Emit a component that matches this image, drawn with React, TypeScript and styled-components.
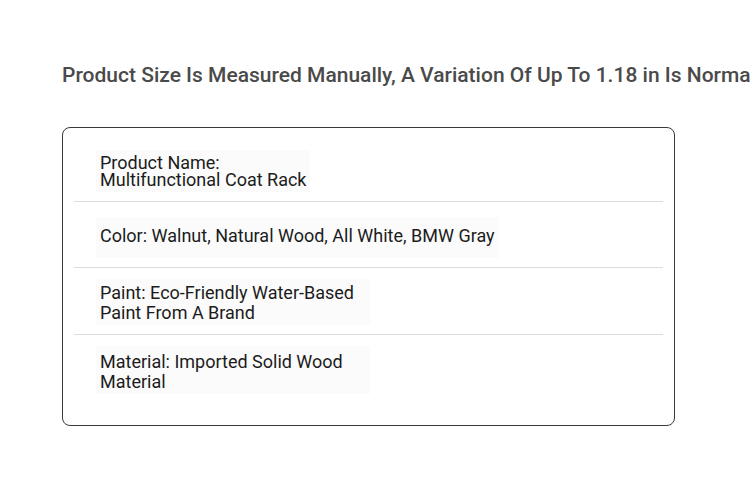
import React from "react";
import styled, { createGlobalStyle } from "styled-components";

const Global = createGlobalStyle`
  html, body { margin: 0; padding: 0; background: #fff; overflow: hidden; }
  body { font-family: Roboto, "Liberation Sans", sans-serif; }
`;

const Page = styled.div`
  width: 750px;
  height: 482px;
  padding: 61px 0 0 62px;
  box-sizing: border-box;
  overflow: hidden;
`;

const Title = styled.h2`
  margin: 0;
  font-size: 21px;
  font-weight: 500;
  line-height: 28px;
  color: #4a4a4a;
  white-space: nowrap;
`;

const Card = styled.div`
  margin-top: 38px;
  width: 613px;
  box-sizing: border-box;
  border: 1px solid #3a3a3a;
  border-radius: 8px;
  padding: 0 11px 22px;
  display: flex;
  flex-direction: column;
`;

const Row = styled.div<{ $top: number }>`
  display: flex;
  align-items: flex-start;
  padding: ${(p) => p.$top}px 0 9px 22px;
  border-bottom: 1px solid #dcdcdc;
  &:last-child { border-bottom: none; }
`;

const Cell = styled.div<{ $max: number; $lh: number; $pt: number; $pb: number }>`
  max-width: ${(p) => p.$max}px;
  padding: ${(p) => p.$pt}px 4px ${(p) => p.$pb}px;
  background: #fbfbfb;
  font-size: 18px;
  line-height: ${(p) => p.$lh}px;
  color: #1c1c1c;
`;

const Line = styled.div``;

export default function App() {
  return (
    <>
      <Global />
      <Page>
        <Title>Product Size Is Measured Manually, A Variation Of Up To 1.18 in Is Normal</Title>
        <Card>
          <Row $top={22}>
            <Cell $max={300} $lh={17} $pt={4} $pb={4}>
              <Line>Product Name:</Line>
              <Line>Multifunctional Coat Rack</Line>
            </Cell>
          </Row>
          <Row $top={15}>
            <Cell $max={520} $lh={21} $pt={8} $pb={12}>
              Color: Walnut, Natural Wood, All White, BMW Gray
            </Cell>
          </Row>
          <Row $top={11}>
            <Cell $max={266} $lh={20} $pt={4} $pb={2}>
              Paint: Eco-Friendly Water-Based Paint From A Brand
            </Cell>
          </Row>
          <Row $top={11}>
            <Cell $max={266} $lh={20} $pt={6} $pb={2}>
              Material: Imported Solid Wood Material
            </Cell>
          </Row>
        </Card>
      </Page>
    </>
  );
}
